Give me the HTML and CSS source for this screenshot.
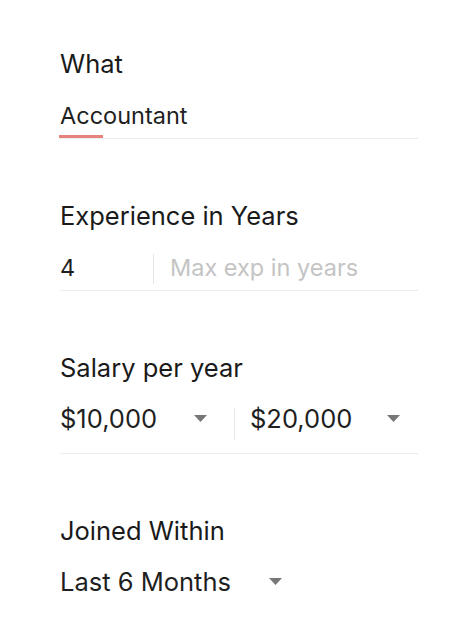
FILE: index.html
```html
<!DOCTYPE html>
<html>
<head>
<meta charset="utf-8">
<link rel="stylesheet" href="styles.css">
</head>
<body>
<form class="filters">
  <div class="field">
    <div class="label">What</div>
    <div class="row">
      <span class="value">Accountant</span>
      <span class="focus-bar"></span>
    </div>
  </div>

  <div class="field">
    <div class="label">Experience in Years</div>
    <div class="row">
      <span class="value cell-min">4</span>
      <span class="divider"></span>
      <span class="value placeholder">Max exp in years</span>
    </div>
  </div>

  <div class="field field-select">
    <div class="label">Salary per year</div>
    <div class="row row-select">
      <span class="select select-min">
        <span class="value value-select">$10,000</span>
        <svg class="caret" width="13" height="7" viewBox="0 0 13 7"><path d="M0 0H13L6.5 7Z"/></svg>
      </span>
      <span class="divider divider-tall"></span>
      <span class="select select-max">
        <span class="value value-select">$20,000</span>
        <svg class="caret" width="13" height="7" viewBox="0 0 13 7"><path d="M0 0H13L6.5 7Z"/></svg>
      </span>
    </div>
  </div>

  <div class="field field-select">
    <div class="label">Joined Within</div>
    <div class="row row-plain">
      <span class="select select-joined">
        <span class="value value-select">Last 6 Months</span>
        <svg class="caret" width="13" height="7" viewBox="0 0 13 7"><path d="M0 0H13L6.5 7Z"/></svg>
      </span>
    </div>
  </div>
</form>
</body>
</html>
```
FILE: styles.css
```css
* { box-sizing: border-box; }

html, body {
  margin: 0;
  background: #ffffff;
}

body {
  font-family: Inter, "Noto Sans", sans-serif;
  color: #1f1f1f;
}

.filters {
  display: flex;
  flex-direction: column;
  gap: 62px;
  padding: 49px 36px 0 60px;
}

.field {
  display: flex;
  flex-direction: column;
  gap: 23px;
}

.field-select {
  gap: 21px;
}

.label {
  font-size: 25.5px;
  line-height: 30px;
  color: #1a1a1a;
}

.row {
  position: relative;
  display: flex;
  align-items: center;
  height: 37px;
  padding-bottom: 8px;
  border-bottom: 1px solid #ececec;
}

.value {
  font-size: 23.5px;
  line-height: 28px;
  white-space: nowrap;
  color: #1f1f1f;
}

.value-select {
  font-size: 25.5px;
  line-height: 30px;
}

.focus-bar {
  position: absolute;
  left: -1px;
  bottom: 0;
  width: 44px;
  height: 3px;
  background: #e5837c;
}

.cell-min {
  width: 93px;
}

.divider {
  align-self: stretch;
  width: 1px;
  margin-top: 0;
  margin-bottom: -2px;
  background: #e6e6e6;
}

.placeholder {
  color: #c4c4c4;
  padding-left: 16px;
}

.row-select {
  height: 50px;
  padding-bottom: 20px;
}

.divider-tall {
  margin-top: 4px;
  margin-bottom: -7px;
}

.select {
  display: flex;
  align-items: center;
}

.caret {
  fill: #777777;
  flex: none;
}

.select-min {
  width: 174px;
  justify-content: space-between;
  padding-right: 27px;
}

.select-max {
  flex: 1;
  justify-content: space-between;
  padding-left: 15px;
  padding-right: 18px;
}

.row-plain {
  border-bottom: none;
}

.select-joined {
  width: 222px;
  justify-content: space-between;
}
```
